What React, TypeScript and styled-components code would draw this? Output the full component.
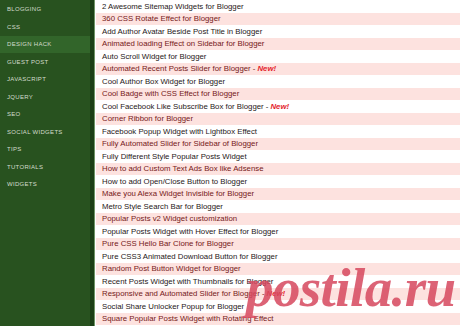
import React from "react";
import styled, { createGlobalStyle } from "styled-components";

const Global = createGlobalStyle`
  html, body { margin: 0; padding: 0; background: #ffffff; }
  body { width: 460px; height: 327px; overflow: hidden; }
`;

const Page = styled.div`
  position: relative;
  display: flex;
  width: 460px;
  height: 327px;
  overflow: hidden;
  background: #ffffff;
  font-family: "Liberation Sans", Arial, sans-serif;
`;

const Sidebar = styled.nav`
  flex: 0 0 90px;
  display: flex;
  flex-direction: column;
  padding-top: 0.5px;
  background: #28521f;
  border-right: 4px solid #1c3f16;
  box-shadow: 1px 0 0 #6f9466;
  height: 325px;
`;

const NavItem = styled.div<{ $active?: boolean }>`
  height: 17.5px;
  display: flex;
  align-items: center;
  padding-left: 7px;
  font-size: 6px;
  letter-spacing: 0.3px;
  color: #d3dccd;
  text-transform: uppercase;
  background: ${(p) => (p.$active ? "#32652a" : "transparent")};
`;

const List = styled.ul`
  flex: 1;
  margin: 0 0 0 2px;
  padding: 0;
  list-style: none;
  display: flex;
  flex-direction: column;
`;

const Row = styled.li<{ $alt: boolean }>`
  height: 12.5px;
  display: flex;
  align-items: center;
  padding-left: 6px;
  font-size: 7.8px;
  font-weight: normal;
  white-space: nowrap;
  color: ${(p) => (p.$alt ? "#751818" : "#1f1818")};
  background: ${(p) => (p.$alt ? "#fde2df" : "#ffffff")};
`;

const NewTag = styled.span`
  color: #e4242c;
  font-style: italic;
  font-weight: bold;
  margin-left: 2px;
`;

const Watermark = styled.div`
  position: absolute;
  left: 246px;
  top: 260px;
  line-height: 55px;
  font-family: "Liberation Serif", serif;
  font-style: italic;
  font-weight: bold;
  font-size: 55px;
  letter-spacing: -0.6px;
  color: rgba(214, 72, 94, 0.85);
  pointer-events: none;
  white-space: nowrap;
`;

const nav = [
  "Blogging",
  "CSS",
  "Design Hack",
  "Guest Post",
  "Javascript",
  "JQuery",
  "SEO",
  "Social Widgets",
  "Tips",
  "Tutorials",
  "Widgets",
];

const posts: { t: string; n?: boolean }[] = [
  { t: "2 Awesome Sitemap Widgets for Blogger" },
  { t: "360 CSS Rotate Effect for Blogger" },
  { t: "Add Author Avatar Beside Post Title in Blogger" },
  { t: "Animated loading Effect on Sidebar for Blogger" },
  { t: "Auto Scroll Widget for Blogger" },
  { t: "Automated Recent Posts Slider for Blogger -", n: true },
  { t: "Cool Author Box Widget for Blogger" },
  { t: "Cool Badge with CSS Effect for Blogger" },
  { t: "Cool Facebook Like Subscribe Box for Blogger -", n: true },
  { t: "Corner Ribbon for Blogger" },
  { t: "Facebook Popup Widget with Lightbox Effect" },
  { t: "Fully Automated Slider for Sidebar of Blogger" },
  { t: "Fully Different Style Popular Posts Widget" },
  { t: "How to add Custom Text Ads Box like Adsense" },
  { t: "How to add Open/Close Button to Blogger" },
  { t: "Make you Alexa Widget Invisible for Blogger" },
  { t: "Metro Style Search Bar for Blogger" },
  { t: "Popular Posts v2 Widget customization" },
  { t: "Popular Posts Widget with Hover Effect for Blogger" },
  { t: "Pure CSS Hello Bar Clone for Blogger" },
  { t: "Pure CSS3 Animated Download Button for Blogger" },
  { t: "Random Post Button Widget for Blogger" },
  { t: "Recent Posts Widget with Thumbnails for Blogger" },
  { t: "Responsive and Automated Slider for Blogger -", n: true },
  { t: "Social Share Unlocker Popup for Blogger" },
  { t: "Square Popular Posts Widget with Rotating Effect" },
];

export default function App() {
  return (
    <>
      <Global />
      <Page>
        <Sidebar>
          {nav.map((n) => (
            <NavItem key={n} $active={n === "Design Hack"}>
              {n}
            </NavItem>
          ))}
        </Sidebar>
        <List>
          {posts.map((p, i) => (
            <Row key={p.t} $alt={i % 2 === 1}>
              {p.t}
              {p.n && <NewTag>New!</NewTag>}
            </Row>
          ))}
        </List>
        <Watermark>postila.ru</Watermark>
      </Page>
    </>
  );
}
